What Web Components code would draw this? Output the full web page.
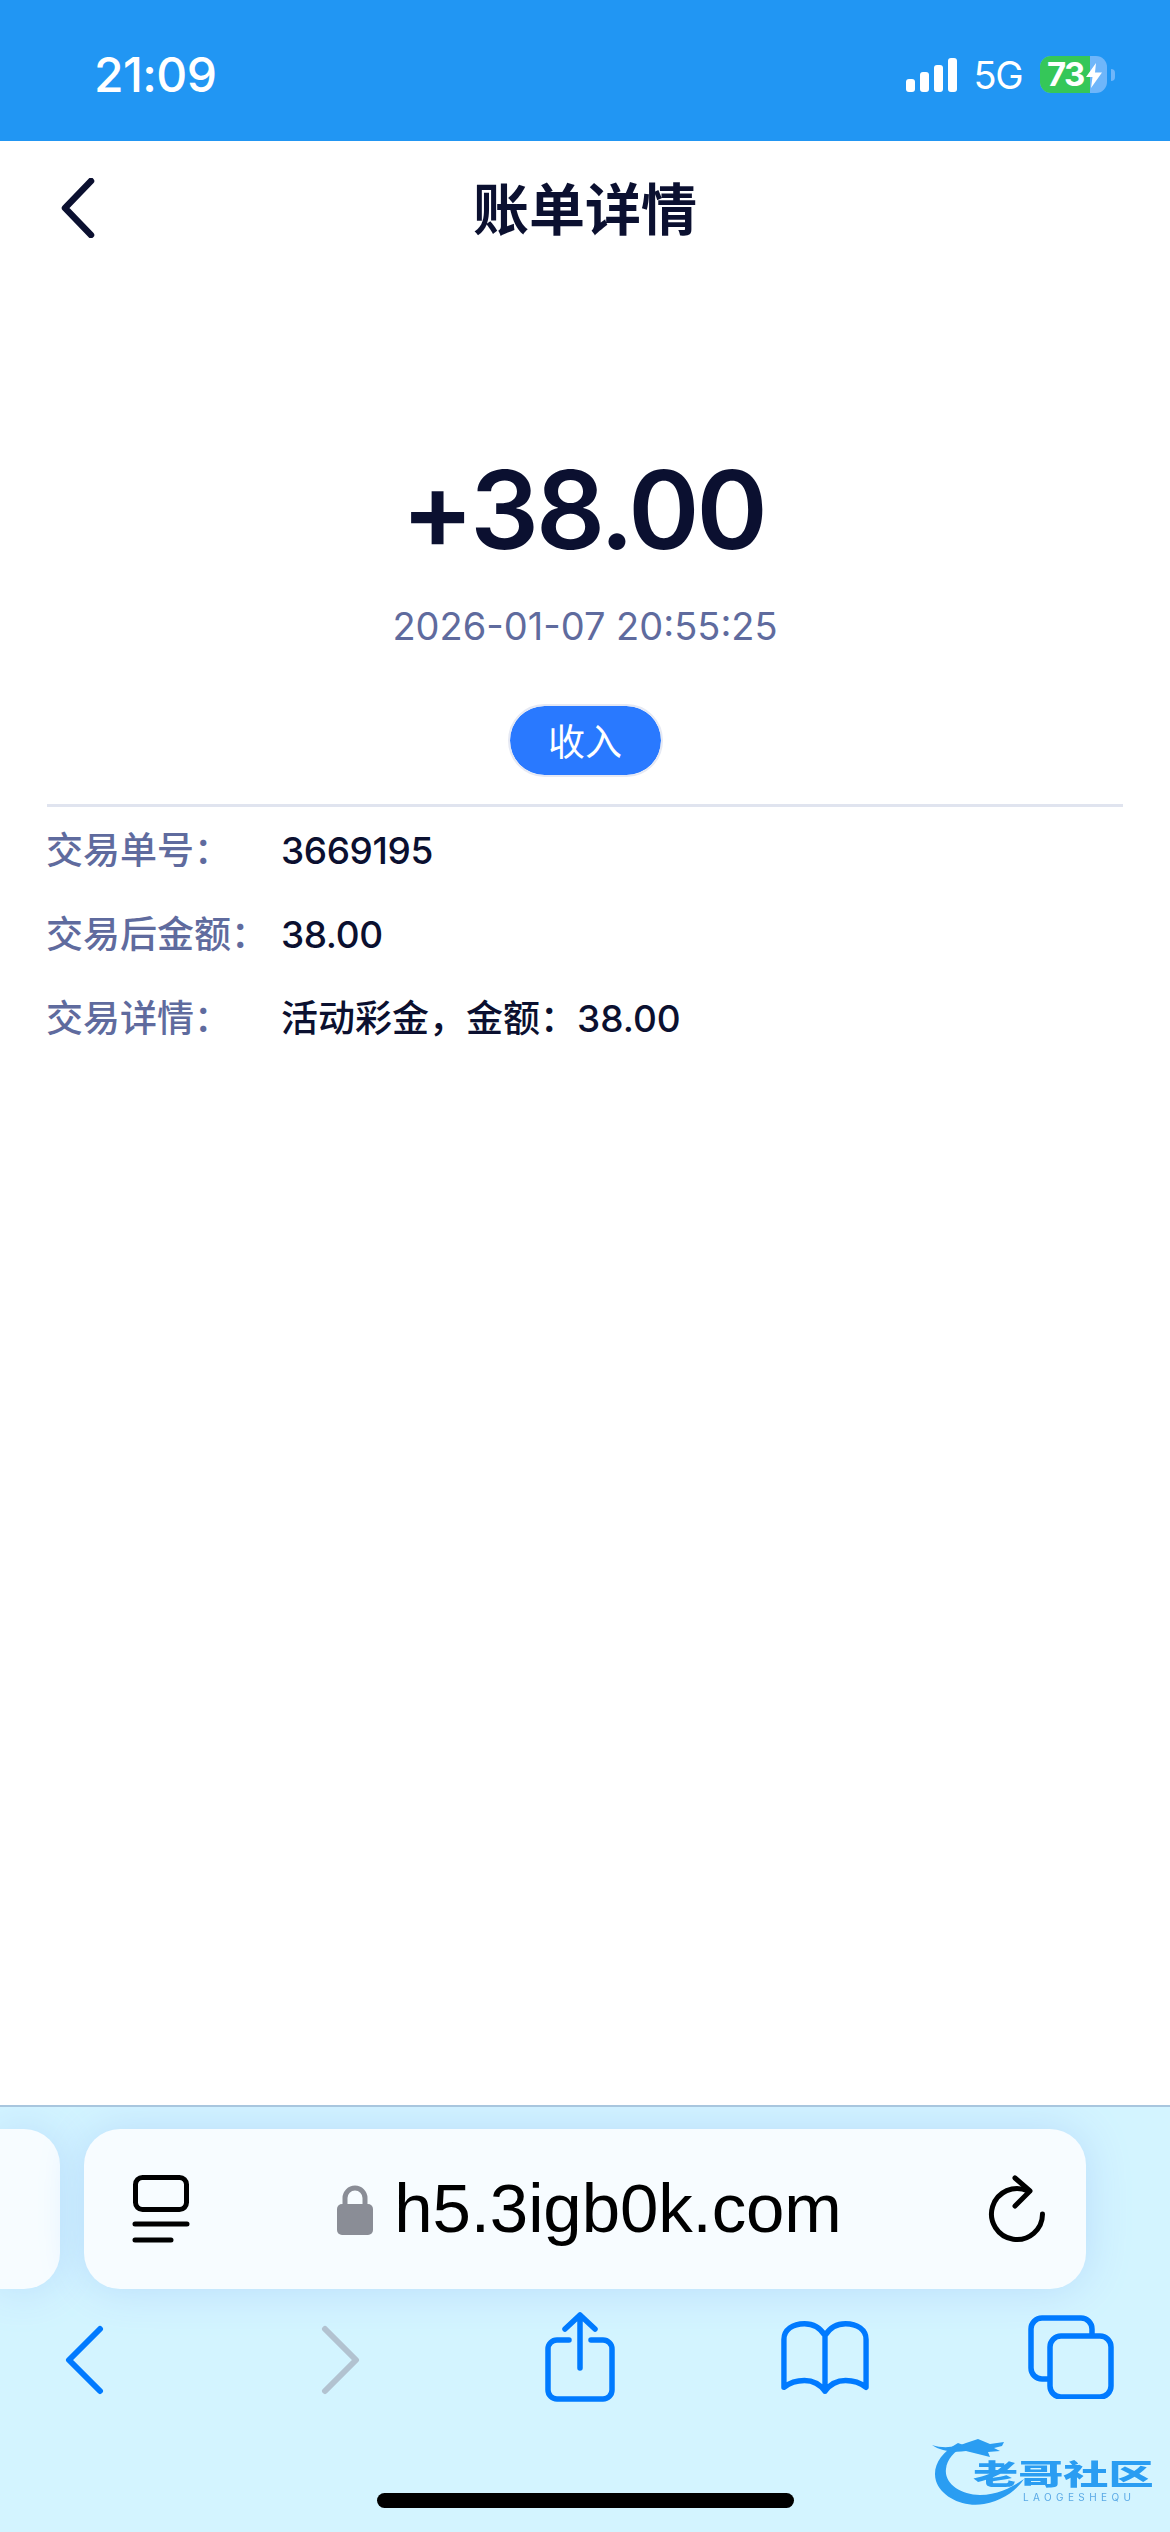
<!DOCTYPE html>
<html lang="zh-CN">
<head>
<meta charset="utf-8">
<title>账单详情</title>
<style>
  html, body { margin: 0; padding: 0; background: #fff; }
  body { width: 1170px; height: 2532px; overflow: hidden; font-family: Inter, "Noto Sans CJK SC", sans-serif; }
</style>
</head>
<body>
<bill-page>
  <status-bar time="21:09" network="5G" battery="73"></status-bar>
  <nav-bar title="账单详情"></nav-bar>
  <bill-summary amount="+38.00" date="2026-01-07 20:55:25" tag="收入"></bill-summary>
  <detail-row numeric label="交易单号：" value="3669195"></detail-row>
  <detail-row numeric label="交易后金额：" value="38.00"></detail-row>
  <detail-row label="交易详情：" value="活动彩金，金额：38.00"></detail-row>
  <safari-toolbar slot="bottom" url="h5.3igb0k.com"></safari-toolbar>
</bill-page>

<script>
class BillPage extends HTMLElement {
  constructor() {
    super();
    this.attachShadow({ mode: "open" });
    this.shadowRoot.innerHTML = `
      <style>
        :host { display: flex; flex-direction: column; width: 1170px; height: 2532px; background: #fff; }
        .content { flex: 1; display: flex; flex-direction: column; }
      </style>
      <div class="content"><slot></slot></div>
      <slot name="bottom"></slot>
    `;
  }
}

class StatusBar extends HTMLElement {
  constructor() {
    super();
    this.attachShadow({ mode: "open" });
  }
  connectedCallback() {
    const time = this.getAttribute("time");
    const network = this.getAttribute("network");
    const battery = this.getAttribute("battery");
    this.shadowRoot.innerHTML = `
      <style>
        :host { display: flex; align-items: center; justify-content: space-between; box-sizing: border-box; height: 141px; padding: 8px 55px 0 94px; background: #2196f3; color: #fff; font-family: Inter, sans-serif; }
        .time { font-size: 48px; font-weight: 500; line-height: 56px; letter-spacing: -0.6px; }
        .right { display: flex; align-items: center; }
        .signal { display: block; }
        .net { font-size: 38px; line-height: 44px; margin-left: 17px; letter-spacing: -1.5px; }
        .battery { position: relative; display: flex; width: 67px; height: 37px; margin-left: 18px; border-radius: 11px; background: #6fb6fa; }
        .level { box-sizing: border-box; width: 50px; padding-left: 7px; border-radius: 11px 0 0 11px; background: #35c759; font-size: 33px; line-height: 37px; font-weight: 700; letter-spacing: -1.6px; white-space: nowrap; }
        .bolt { position: absolute; left: 46px; top: 7px; }
        .cap { width: 4px; height: 12px; margin-left: 4px; border-radius: 0 6px 6px 0; background: #6fb6fa; }
      </style>
      <span class="time">${time}</span>
      <div class="right">
        <svg class="signal" width="51" height="34" viewBox="0 0 51 34" fill="#fff">
          <rect x="0" y="21" width="9" height="13" rx="3"/>
          <rect x="14" y="14" width="9" height="20" rx="3"/>
          <rect x="28" y="7" width="9" height="27" rx="3"/>
          <rect x="42" y="0" width="9" height="34" rx="3"/>
        </svg>
        <span class="net">${network}</span>
        <div class="battery">
          <div class="level">${battery}</div>
          <svg class="bolt" width="16" height="25" viewBox="0 0 16 25" fill="#fff"><path d="M10 0 L0 14 H6.5 L5 25 L16 9.5 H9 Z"/></svg>
        </div>
        <div class="cap"></div>
      </div>
    `;
  }
}

class NavBar extends HTMLElement {
  constructor() {
    super();
    this.attachShadow({ mode: "open" });
  }
  connectedCallback() {
    this.shadowRoot.innerHTML = `
      <style>
        :host { display: flex; align-items: center; height: 134px; position: relative; padding-left: 60px; color: #0b1030; }
        svg { display: block; }
        h1 { position: absolute; left: 0; right: 0; margin: -5px 0 0; text-align: center; font: 600 56px/70px "Noto Sans CJK SC", sans-serif; }
      </style>
      <svg width="36" height="60" viewBox="0 0 36 60" fill="none" stroke="#0b1030" stroke-width="6.500" stroke-linecap="round" stroke-linejoin="round"><path d="M31 3 L5 30 L31 57"/></svg>
      <h1>${this.getAttribute("title")}</h1>
    `;
  }
}

class BillSummary extends HTMLElement {
  constructor() {
    super();
    this.attachShadow({ mode: "open" });
  }
  connectedCallback() {
    this.shadowRoot.innerHTML = `
      <style>
        :host { display: flex; flex-direction: column; align-items: center; margin: 0 47px; padding: 170px 0 27px; border-bottom: 3px solid #e0e4ef; font-family: Inter, "Noto Sans CJK SC", sans-serif; }
        .amount { font-size: 108px; line-height: 130px; font-weight: 600; color: #0b1030; letter-spacing: -3px; margin-left: -4px; }
        .date { margin-top: 28px; font-size: 38px; line-height: 46px; color: #5f6b9e; }
        .tag { box-sizing: border-box; width: 155px; height: 73px; margin-top: 55px; border: 2px solid #e6e9f3; border-radius: 37px; background: #2979ff; background-clip: padding-box; color: #fff; font: 37px/68px "Noto Sans CJK SC", sans-serif; text-align: center; }
      </style>
      <div class="amount">${this.getAttribute("amount")}</div>
      <div class="date">${this.getAttribute("date")}</div>
      <div class="tag">${this.getAttribute("tag")}</div>
    `;
  }
}

class DetailRow extends HTMLElement {
  constructor() {
    super();
    this.attachShadow({ mode: "open" });
  }
  connectedCallback() {
    this.shadowRoot.innerHTML = `
      <style>
        :host { display: flex; align-items: center; height: 84px; padding-left: 46px; font: 500 37px/50px Inter, "Noto Sans CJK SC", sans-serif; }
        :host(:first-of-type) { margin-top: 2px; }
        :host([numeric]) .value { letter-spacing: -0.4px; }
        .label { width: 235px; flex: none; color: #5f6b9e; }
        .value { color: #0b1030; }
      </style>
      <span class="label">${this.getAttribute("label")}</span>
      <span class="value">${this.getAttribute("value")}</span>
    `;
  }
}

class SafariToolbar extends HTMLElement {
  constructor() {
    super();
    this.attachShadow({ mode: "open" });
  }
  connectedCallback() {
    this.shadowRoot.innerHTML = `
      <style>
        :host { display: block; position: relative; box-sizing: border-box; height: 427px; border-top: 2px solid #a8c6de; background: #d3f4ff; overflow: hidden; }
        .cards { display: flex; gap: 24px; height: 160px; margin-top: 22px; }
        .card { background: #f7fcff; box-shadow: 0 0 44px #b9dcfb; }
        .prev { flex: none; width: 60px; border-radius: 0 36px 36px 0; }
        .url { flex: none; width: 1002px; box-sizing: border-box; border-radius: 36px; display: flex; align-items: center; padding: 0 40px 0 48px; }
        .address { flex: 1; display: flex; align-items: center; justify-content: center; gap: 21px; margin-left: 1px; }
        .host { font: 69px/80px "Liberation Sans", Arial, sans-serif; color: #000; letter-spacing: -0.1px; }
        svg { display: block; flex: none; }
        .tools { display: flex; align-items: flex-start; height: 92px; margin-top: 36px; }
        .home { width: 417px; height: 15px; border-radius: 8px; background: #000; position: absolute; left: 377px; top: 386px; }
      </style>
      <div class="cards">
        <div class="card prev"></div>
        <div class="card url">
          <svg width="58" height="68" viewBox="0 0 58 68" fill="none" stroke="#000" stroke-width="5" stroke-linecap="round">
            <rect x="3.5" y="2.5" width="51" height="32" rx="7"/>
            <path d="M3 49 H55 M3 65 H39"/>
          </svg>
          <div class="address">
            <svg width="36" height="52" viewBox="0 0 36 52">
              <path d="M8 24 V15 a10 10 0 0 1 20 0 V24" fill="none" stroke="#8a8d96" stroke-width="5"/>
              <rect x="0" y="21" width="36" height="31" rx="5" fill="#8a8d96"/>
            </svg>
            <span class="host">${this.getAttribute("url")}</span>
          </div>
          <svg width="58" height="68" viewBox="0 0 58 68" fill="none" stroke="#000" stroke-width="5" stroke-linecap="round" stroke-linejoin="round">
            <path d="M40 16 A25.500 25.500 0 1 0 54.500 39"/>
            <path d="M27 3 L42 16 L27 31"/>
          </svg>
        </div>
      </div>
      <div class="tools">
        <svg style="margin-left:64px" width="40" height="70" viewBox="0 0 40 70" fill="none" stroke="#007aff" stroke-width="6" stroke-linecap="round" stroke-linejoin="round"><path d="M36 4 L5 35 L36 66"/></svg>
        <svg style="margin-left:217px" width="40" height="70" viewBox="0 0 40 70" fill="none" stroke="#b2c2d0" stroke-width="6" stroke-linecap="round" stroke-linejoin="round"><path d="M4 4 L35 35 L4 66"/></svg>
        <svg style="margin-left:184px;margin-top:-13px" width="70" height="90" viewBox="0 0 70 90" fill="none" stroke="#007aff" stroke-width="5.500" stroke-linecap="round" stroke-linejoin="round">
          <path d="M24 28 H12 a9 9 0 0 0 -9 9 V78 a9 9 0 0 0 9 9 H58 a9 9 0 0 0 9 -9 V37 a9 9 0 0 0 -9 -9 H46"/>
          <path d="M35 56 V3 M20 17 L35 3 L50 17"/>
        </svg>
        <svg style="margin-left:166px;margin-top:-5px" width="88" height="76" viewBox="0 0 90 76" fill="none" stroke="#007aff" stroke-width="5.500" stroke-linecap="round" stroke-linejoin="round">
          <path d="M45 15 C40 7 33 3 24 3 C12 3 3 9 3 19 V68 C8 64 15 61 24 61 C33 61 40 65 45 72 C50 65 57 61 66 61 C75 61 82 64 87 68 V19 C87 9 78 3 66 3 C57 3 50 7 45 15 V72"/>
        </svg>
        <svg style="margin-left:159px;margin-top:-10px" width="86" height="84" viewBox="0 0 86 84" fill="none" stroke="#007aff" stroke-width="5.500" stroke-linejoin="round">
          <rect x="3" y="3" width="61" height="61" rx="11"/>
          <rect x="22" y="21" width="61" height="61" rx="11" fill="#d3f4ff"/>
        </svg>
      </div>
      <div class="home"></div>
      <site-watermark></site-watermark>
    `;
  }
}

// overlay stamped on the screenshot, bottom right corner
class SiteWatermark extends HTMLElement {
  constructor() {
    super();
    this.attachShadow({ mode: "open" });
    this.shadowRoot.innerHTML = `
      <style>
        :host { display: block; position: absolute; left: 932px; top: 330px; width: 225px; height: 70px; filter: blur(0.7px); }
        svg { position: absolute; left: 0; top: 0; }
        .name { position: absolute; left: 41px; top: 22px; font: 900 43px/30px Inter, "Noto Sans CJK SC", sans-serif; color: #2a9df2; white-space: nowrap; transform-origin: left center; transform: scale(1.05, 0.66); }
        .latin { position: absolute; left: 91px; top: 55px; font: 400 10px/11px Inter, sans-serif; letter-spacing: 4.4px; color: #5aa9e6; white-space: nowrap; }
      </style>
      <svg width="100" height="70" viewBox="0 0 100 70">
        <path d="M26 6 C8 16 0 30 4 44 C9 60 32 71 52 67 C70 64 84 54 92 42 C80 50 66 58 48 58 C28 58 12 46 14 32 C15 22 22 14 34 9 Z" fill="#2a9df2"/>
        <path d="M0 8 C12 12 24 10 34 6 L46 2 L58 7 L72 5 L70 9 L62 11 L68 14 L56 15 L58 20 L46 17 L34 14 C22 16 8 14 0 8 Z" fill="#2a9df2"/>
      </svg>
      <div class="name">老哥社区</div>
      <div class="latin">LAOGESHEQU</div>
    `;
  }
}

customElements.define("bill-page", BillPage);
customElements.define("status-bar", StatusBar);
customElements.define("nav-bar", NavBar);
customElements.define("bill-summary", BillSummary);
customElements.define("detail-row", DetailRow);
customElements.define("safari-toolbar", SafariToolbar);
customElements.define("site-watermark", SiteWatermark);
</script>
</body>
</html>
